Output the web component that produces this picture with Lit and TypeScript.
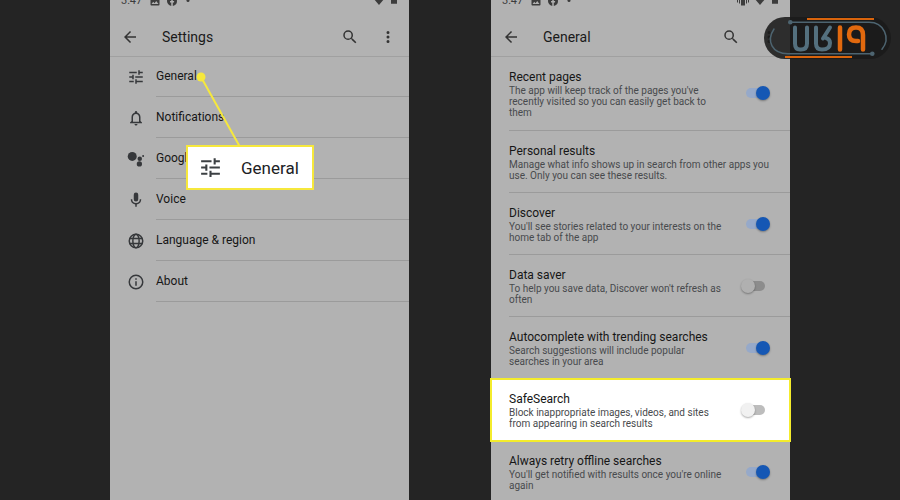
import { LitElement, html, svg, css } from "lit";
import { customElement, property } from "lit/decorators.js";

const shapes: Record<string, unknown> = {
  back: svg`<path d="M20 11H7.83l5.59-5.59L12 4l-8 8 8 8 1.41-1.41L7.83 13H20z"/>`,
  search: svg`<path d="M15.5 14h-.79l-.28-.27A6.47 6.47 0 0 0 16 9.5 6.5 6.5 0 1 0 9.5 16c1.61 0 3.09-.59 4.23-1.57l.27.28v.79l5 4.99L20.49 19zm-6 0a4.5 4.5 0 1 1 0-9 4.5 4.5 0 0 1 0 9z"/>`,
  more: svg`<path d="M12 8a2 2 0 1 0 0-4 2 2 0 0 0 0 4zm0 2a2 2 0 1 0 0 4 2 2 0 0 0 0-4zm0 6a2 2 0 1 0 0 4 2 2 0 0 0 0-4z"/>`,
  tune: svg`<path d="M3 17v2h6v-2zM3 5v2h10V5zm10 16v-2h8v-2h-8v-2h-2v6zM7 9v2H3v2h4v2h2V9zm14 4v-2H11v2zm-6-4h2V7h4V5h-4V3h-2z"/>`,
  bell: svg`<path d="M12 22a2 2 0 0 0 2-2h-4c0 1.100.900 2 2 2zm6-6v-5c0-3.070-1.630-5.640-4.500-6.320V4a1.500 1.500 0 0 0-3 0v.680C7.640 5.360 6 7.920 6 11v5l-2 2v1h16v-1zm-2 1H8v-6c0-2.480 1.510-4.500 4-4.500s4 2.020 4 4.500z"/>`,
  assistant: svg`<circle cx="7" cy="8.500" r="6"/><circle cx="17" cy="11.500" r="3"/><circle cx="21.500" cy="8" r="1.300"/><circle cx="16.500" cy="18.500" r="3.500"/>`,
  mic: svg`<path d="M12 14a3 3 0 0 0 3-3V5a3 3 0 0 0-6 0v6a3 3 0 0 0 3 3zm5-3a5 5 0 0 1-10 0H5a7 7 0 0 0 6 6.920V21h2v-3.080A7 7 0 0 0 19 11z"/>`,
  globe: svg`<g fill="none" stroke="currentColor" stroke-width="2"><circle cx="12" cy="12" r="9"/><ellipse cx="12" cy="12" rx="4.200" ry="9"/><path d="M3.500 8.700h17M3.500 15.300h17"/></g>`,
  info: svg`<path d="M11 7h2v2h-2zm0 4h2v6h-2zm1-9a10 10 0 1 0 0 20 10 10 0 0 0 0-20zm0 18a8 8 0 1 1 0-16 8 8 0 0 1 0 16z"/>`,
  photo: svg`<path d="M21 19V5a2 2 0 0 0-2-2H5a2 2 0 0 0-2 2v14c0 1.100.900 2 2 2h14a2 2 0 0 0 2-2zM8.500 13.500l2.500 3L14.500 12l4.500 6H5z"/>`,
  social: svg`<path d="M22 12a10 10 0 1 0-11.500 9.900v-7H8V12h2.500V9.800c0-2.500 1.500-3.900 3.800-3.900l2.200.200v2.500h-1.300c-1.200 0-1.600.800-1.600 1.500V12h2.800l-.500 2.900h-2.300v7A10 10 0 0 0 22 12z"/>`,
  dot: svg`<circle cx="10" cy="11" r="3"/>`,
  wifi: svg`<path d="M12 20 23 7A17 17 0 0 0 1 7z"/>`,
  battery: svg`<path d="M8-4h8v2h5v22H3V-2h5z"/>`,
  vibrate: svg`<path d="M8 3h8v18H8zM4 7h2v10H4zm14 0h2v10h-2zM0 9h2v6H0zm22 0h2v6h-2z"/>`,
};

@customElement("ui-icon")
class UiIcon extends LitElement {
  @property() name = "";
  static styles = css`
    :host { display: block; width: 18px; height: 18px; flex: none; }
    svg { display: block; width: 100%; height: 100%; fill: currentColor; overflow: visible; }
  `;
  render() {
    return html`<svg viewBox="0 0 24 24" aria-hidden="true">${shapes[this.name]}</svg>`;
  }
}

@customElement("phone-top")
class PhoneTop extends LitElement {
  @property() heading = "";
  @property({ type: Boolean }) vibrate = false;
  static styles = css`
    :host { display: block; position: relative; box-shadow: 0 1px #a0a0a0; }
    .status { display: flex; align-items: center; gap: 5px; height: 16px; margin-top: -7px; padding: 0 11px; font-size: 11px; line-height: 16px; color: #3c3c3c; }
    .status ui-icon { width: 12px; height: 12px; }
    .time { margin-right: 2px; }
    .space { flex: 1; }
    .status .battery { width: 8px; }
    .bar { display: flex; align-items: center; height: 38px; margin-top: 9px; padding: 0 12px 0 11px; color: #333; }
    h1 { flex: 1; margin: 0 0 0 23px; font: 400 14px/20px Roboto, sans-serif; color: #1a1a1a; }
    button { padding: 0; border: 0; background: none; color: inherit; }
    .more { margin-left: 20px; }
  `;
  render() {
    return html`
      <div class="status">
        <span class="time">3:47</span>
        <ui-icon name="photo"></ui-icon><ui-icon name="social"></ui-icon><ui-icon name="dot"></ui-icon>
        <span class="space"></span>
        ${this.vibrate ? html`<ui-icon name="vibrate"></ui-icon>` : ""}
        <ui-icon name="wifi"></ui-icon><ui-icon class="battery" name="battery"></ui-icon>
      </div>
      <header class="bar">
        <button aria-label="Back"><ui-icon name="back"></ui-icon></button>
        <h1>${this.heading}</h1>
        <button aria-label="Search"><ui-icon name="search"></ui-icon></button>
        <button class="more" aria-label="More options"><ui-icon name="more"></ui-icon></button>
      </header>`;
  }
}

const menu = [
  ["tune", "General"],
  ["bell", "Notifications"],
  ["assistant", "Google Assistant"],
  ["mic", "Voice"],
  ["globe", "Language & region"],
  ["info", "About"],
];

interface Option { title: string; text: string; on?: boolean; kind?: string }
const options: Option[] = [
  { title: "Recent pages", text: "The app will keep track of the pages you've recently visited so you can easily get back to them", on: true, kind: "tall" },
  { title: "Personal results", text: "Manage what info shows up in search from other apps you use. Only you can see these results." },
  { title: "Discover", text: "You'll see stories related to your interests on the home tab of the app", on: true },
  { title: "Data saver", text: "To help you save data, Discover won't refresh as often", on: false },
  { title: "Autocomplete with trending searches", text: "Search suggestions will include popular searches in your area", on: true },
  { title: "SafeSearch", text: "Block inappropriate images, videos, and sites from appearing in search results", on: false, kind: "picked" },
  { title: "Always retry offline searches", text: "You'll get notified with results once you're online again", on: true },
];

@customElement("app-root")
class AppRoot extends LitElement {
  static styles = css`
    :host { display: block; position: relative; height: 100vh; overflow: hidden; background: #242424; font-family: Roboto, sans-serif; }
    main { display: flex; gap: 82px; height: 100%; padding: 0 110px; }
    .phone { position: relative; flex: 1; min-width: 0; background: #b2b2b2; }
    ul { margin: 0; padding: 0; list-style: none; }
    .entry { display: flex; align-items: center; gap: 11px; padding-left: 17px; color: #36383b; }
    .entry a { flex: 1; box-sizing: border-box; height: 41px; border-bottom: 1px solid #9b9b9b; font-size: 12px; line-height: 41px; color: #161616; text-decoration: none; }
    .leader { position: absolute; left: 86px; top: 72px; width: 48px; height: 76px; }
    .callout { position: absolute; left: 76px; top: 145px; display: flex; align-items: center; gap: 18px; padding: 0 13px 0 10px; height: 41px; border: 2px solid #f6e83c; background: #fff; color: #3c4043; font-size: 17px; white-space: nowrap; }
    .callout ui-icon { width: 25px; height: 25px; }
    .callout span { color: #202124; }
    .option { display: flex; align-items: center; gap: 14px; box-sizing: border-box; height: 62px; margin-left: 18px; padding-right: 20px; border-bottom: 1px solid #9b9b9b; }
    .tall { height: 75px; }
    .picked { position: relative; margin-left: 0; padding-left: 18px; border-color: transparent; background: #fff; outline: 2px solid #f4ec2c; outline-offset: -1px; }
    .copy { flex: 1; }
    .plain { margin-right: -10px; }
    .name { display: block; font-size: 12px; line-height: 16px; color: #161616; }
    p { margin: 0; font-size: 10px; line-height: 11px; color: #484a4d; }
    input { appearance: none; position: relative; flex: none; width: 29px; height: 14px; margin: 0; }
    input::before { content: ""; position: absolute; inset: 2px 5px; border-radius: 5px; background: #8c8c8c; }
    input::after { content: ""; position: absolute; left: 0; top: 0; width: 14px; height: 14px; border-radius: 50%; background: #b0b0b0; box-shadow: 0 1px 2px #0005; }
    input:checked::before { background: #96a9c9; }
    input:checked::after { left: auto; right: 0; background: #1557b4; }
    .picked input::before { background: #bdbdbd; }
    .picked input::after { background: #f1f1f1; }
    .logo { position: absolute; top: 17px; right: 9px; width: 127px; height: 42px; fill: none; stroke-linecap: round; }
  `;
  render() {
    return html`
      <main>
        <section class="phone">
          <phone-top heading="Settings"></phone-top>
          <ul>${menu.map(([icon, label]) => html`<li class="entry"><ui-icon name=${icon}></ui-icon><a href="#">${label}</a></li>`)}</ul>
          <svg class="leader" viewBox="0 0 48 76" aria-hidden="true">
            <path d="M5 5 44 75" stroke="#f6e83c" stroke-width="2"/><circle cx="5" cy="5" r="4.500" fill="#f6e83c"/>
          </svg>
          <div class="callout"><ui-icon name="tune"></ui-icon><span>General</span></div>
        </section>
        <section class="phone">
          <phone-top heading="General" vibrate></phone-top>
          <ul>${options.map((o, i) => html`
            <li class="option ${o.kind ?? ""}">
              <div class="copy ${o.on === undefined ? "plain" : ""}">
                ${o.on === undefined
                  ? html`<span class="name">${o.title}</span>`
                  : html`<label class="name" for="option-${i}">${o.title}</label>`}
                <p>${o.text}</p>
              </div>
              ${o.on === undefined ? "" : html`<input id="option-${i}" type="checkbox" role="switch" ?checked=${o.on}>`}
            </li>`)}</ul>
        </section>
      </main>
      <svg class="logo" viewBox="0 0 127 42" role="img" aria-label="UR19">
        <rect width="127" height="42" rx="21" fill="#1a1a1a" fill-opacity=".88"/>
        <g stroke="#d9640c" stroke-width="2" stroke-linecap="butt"><path d="M43 2h67M21 40h67"/></g>
        <g stroke="#4d6470" stroke-width="1.500"><path d="M26 5.300h79c15 0 22 16 13 27M108 36.700H24C8 36.700 2 24 10 12"/></g>
        <g fill="#4d6470"><circle cx="26.300" cy="5.300" r="2.300"/><circle cx="108.300" cy="36.700" r="2.300"/></g>
        <g stroke="#54707e" stroke-width="4"><path d="M31 10.500v16q0 6 5 6h1q6 0 6-6v-16M52 10.500v16q0 6 6 6 8 0 8-6.500 0-4-4-5M66 10.500l-7 11"/></g>
        <g stroke="#e2690e" stroke-width="4.500"><path d="M76 10.500v22M99 32.500V18q0-7.500-7-7.500t-7 7q0 6.500 7 6.500h2"/></g>
      </svg>`;
  }
}
